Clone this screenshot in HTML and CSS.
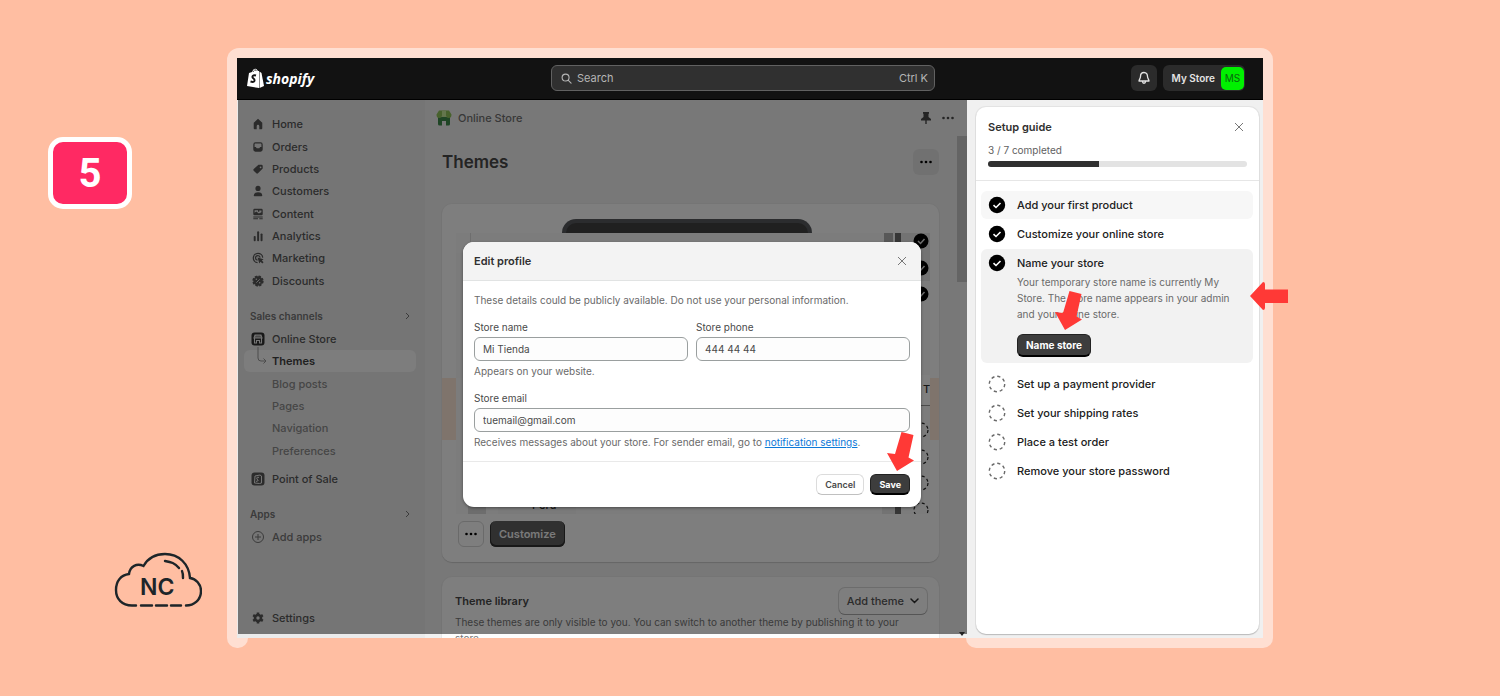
FILE: index.html
```html
<!DOCTYPE html>
<html lang="en">
<head>
    <meta charset="UTF-8">
    <meta name="viewport" content="width=device-width, initial-scale=1.0">
    <title>Edit profile - Shopify</title>
    <link rel="stylesheet" href="styles.css">
</head>
<body>
    <div class="page">
        <div class="margin-column">
            <div class="step">5</div>
            <svg class="cloud" viewBox="0 0 88 56" fill="none" stroke="#1d2529" stroke-width="2.4" stroke-linecap="round">
                <path d="M22 53.500H18C8 53.500 2 47 2 38C2 29 7 23 15 22C16 14 23 11 29.500 14C34 6 42 2 51 2C65 2 75 12 76 26C82 27 87 32 87 39C87 48 80 53.500 72 53.500"/>
                <path d="M27 53.500H38M42 53.500H53M57 53.500H67"/>
                <path d="M51 9C57 10 61 11 65 16M68 19C69 21 69 23 69 26"/>
                <text x="26" y="43" class="cloud-text">NC</text>
            </svg>
        </div>

        <div class="frame">
            <div class="frame-top">
                <div class="app">
                    <header class="topbar">
                        <a class="logo" href="#">
                            <svg width="17" height="20" viewBox="0 0 17 20">
                                <path fill="#fff" d="M2 5L5 4C6 1 8 0 9 1C10 1 10 2 11 3L12 3V20L0 18Z"/>
                                <path fill="#fff" d="M12.500 3.500L14.500 5L17 18L12.500 20Z"/>
                                <path fill="none" stroke="#121212" stroke-width=".7" d="M6 4C7 2 8 1.500 9 2V3"/>
                                <path fill="none" stroke="#121212" stroke-width="1.900" d="M9 7.500C6 6.500 4.500 8.500 6 10C8.500 12 8 15 3.500 13.500"/>
                            </svg>
                            <span>shopify</span>
                        </a>
                        <div class="search">
                            <svg width="11" height="11" viewBox="0 0 12 12" fill="none" stroke="#b5b5b5" stroke-width="1.200" stroke-linecap="round"><circle cx="5" cy="5" r="3.800"/><path d="M8 8L11 11"/></svg>
                            <input type="text" placeholder="Search" aria-label="Search">
                            <span>Ctrl K</span>
                        </div>
                        <div class="account">
                            <button class="bell" aria-label="Notifications">
                                <svg width="14" height="14" viewBox="0 0 14 14" fill="none" stroke="#e3e3e3" stroke-width="1.300" stroke-linejoin="round"><path d="M7 1.500C4.500 1.500 3.500 3.500 3.500 5.500C3.500 7.500 2 8.500 2 10H12C12 8.500 10.500 7.500 10.500 5.500C10.500 3.500 9.500 1.500 7 1.500ZM5.500 10.500C5.500 12.800 8.500 12.800 8.500 10.500"/></svg>
                            </button>
                            <button class="store">My Store <span class="avatar">MS</span></button>
                        </div>
                    </header>

                    <div class="workspace">
                        <div class="admin">
                            <nav class="sidebar">
                                <ul class="menu">
                                    <li><a href="#"><svg viewBox="0 0 14 14"><path d="M7 1L12 5.500V12Q12 13 11 13H8.500V9.500Q8.500 8 7 8T5.500 9.500V13H3Q2 13 2 12V5.500Z"/></svg>Home</a></li>
                                    <li><a href="#"><svg viewBox="0 0 14 14"><path fill-rule="evenodd" d="M4 1.500H10Q12.500 1.500 12.500 4V10Q12.500 12.500 10 12.500H4Q1.500 12.500 1.500 10V4Q1.500 1.500 4 1.500ZM3 3.500V7H4.500L5.500 8.500H8.500L9.500 7H11V3.500Q11 3 10.500 3H3.500Q3 3 3 3.500Z"/></svg>Orders</a></li>
                                    <li><a href="#"><svg viewBox="0 0 14 14"><path fill-rule="evenodd" d="M7.500 2H11Q12.500 2 12.500 3.500V6.500L7 12Q6 13 5 12L2 9Q1 8 2 7ZM10 4A1 1 0 1 0 10 6A1 1 0 1 0 10 4Z"/></svg>Products</a></li>
                                    <li><a href="#"><svg viewBox="0 0 14 14"><circle cx="7" cy="4" r="3"/><path d="M2 12.500Q2 8.500 7 8.500T12 12.500Q12 13 11 13H3Q2 13 2 12.500Z"/></svg>Customers</a></li>
                                    <li><a href="#"><svg viewBox="0 0 14 14"><path fill-rule="evenodd" d="M3 1H11Q12.500 1 12.500 2.500V7Q12.500 8.500 11 8.500H3Q1.500 8.500 1.500 7V2.500Q1.500 1 3 1ZM3 5.500L5 4L8 6.500L11 5V3H8.500V4.500H7V2.500H3Z"/><path d="M1.500 9.800H12.500V11H1.500ZM1.500 12H7V13.200H1.500ZM8.500 12H12.500V13.200H8.500Z"/></svg>Content</a></li>
                                    <li><a href="#"><svg viewBox="0 0 14 14"><rect x="2" y="7" width="2.300" height="6" rx="1"/><rect x="6" y="1.500" width="2.300" height="11.500" rx="1"/><rect x="10" y="4" width="2.300" height="9" rx="1"/></svg>Analytics</a></li>
                                    <li><a href="#"><svg viewBox="0 0 14 14"><path fill="none" stroke="currentColor" stroke-width="1.500" d="M12.500 6.500A5.500 5.500 0 1 0 6.500 12.500M9.500 6.500A2.700 2.700 0 1 0 6.500 9.500"/><path d="M6.500 6.500L13.500 8.500L11.500 10L13.500 12L12 13.500L10 11.500L8.500 13.500Z"/></svg>Marketing</a></li>
                                    <li><a href="#"><svg viewBox="0 0 14 14"><circle cx="7" cy="7" r="5.500"/><circle cx="7" cy="7" r="5.600" fill="none" stroke="currentColor" stroke-width="2" stroke-dasharray="2.800 1.600"/><path stroke="#ebebeb" d="M5 9L9 5"/><circle class="hole" cx="5" cy="5" r=".8"/><circle class="hole" cx="9" cy="9" r=".8"/></svg>Discounts</a></li>
                                </ul>
                                <h3 class="section">Sales channels <svg width="8" height="8" viewBox="0 0 8 8"><path d="M3 1L6 4L3 7"/></svg></h3>
                                <a class="channel online" href="#"><svg viewBox="0 0 14 14"><rect x=".5" y=".5" width="13" height="13" rx="3"/><path fill="none" stroke="#ebebeb" stroke-width="1.100" d="M4 3H10L11 6H3ZM5 3V6M7 3V6M9 3V6M3.500 6.500V11H5.500V8.500H8.500V11H10.500V6.500"/></svg>Online Store</a>
                                <ul class="submenu">
                                    <li><a class="current" href="#"><svg viewBox="0 0 12 18" fill="none"><path d="M2 0V11Q2 14 5 14H10M7.500 11.500L10 14L7.500 16.500"/></svg>Themes</a></li>
                                    <li><a href="#">Blog posts</a></li>
                                    <li><a href="#">Pages</a></li>
                                    <li><a href="#">Navigation</a></li>
                                    <li><a href="#">Preferences</a></li>
                                </ul>
                                <a class="channel pos" href="#"><svg viewBox="0 0 14 14"><rect x=".5" y=".5" width="13" height="13" rx="3"/><path fill="none" stroke="#ebebeb" d="M4 4L9 3L10.500 4V11L8.500 11.500L3.500 11ZM8 5.500Q6 4.500 5.800 6T7 8T5 9.500"/></svg>Point of Sale</a>
                                <h3 class="section">Apps <svg width="8" height="8" viewBox="0 0 8 8"><path d="M3 1L6 4L3 7"/></svg></h3>
                                <a class="channel add" href="#"><svg viewBox="0 0 14 14" fill="none" stroke="currentColor"><circle cx="7" cy="7" r="5.500"/><path d="M7 4V10M4 7H10"/></svg>Add apps</a>
                                <a class="channel settings" href="#"><svg viewBox="0 0 14 14"><circle cx="7" cy="7" r="3" fill="none" stroke="currentColor" stroke-width="2.600"/><path stroke="currentColor" stroke-width="2.600" d="M7 1.500V3.500M7 10.500V12.500M2.200 4.200L4 5.300M10 8.700L11.800 9.800M2.200 9.800L4 8.700M10 5.300L11.800 4.200"/></svg>Settings</a>
                            </nav>

                            <main class="content">
                                <div class="crumbs">
                                    <svg width="16" height="16" viewBox="0 0 16 16"><path fill="#3f8a4a" d="M2 7H14V14Q14 15.500 12.500 15.500H10V11H6V15.500H3.500Q2 15.500 2 14Z"/><path fill="#91c45a" d="M3 .5H13L15.500 4.500Q15.500 8 12.800 8T10 5.500Q10 7 8 7T6 5.500Q6 8 3.200 8T.5 4.500Z"/><path fill="#c9ec9a" d="M6 .5H10V5.500Q10 7 8 7T6 5.500Z"/></svg>
                                    <span>Online Store</span>
                                    <svg class="pin" width="12" height="12" viewBox="0 0 12 12"><path fill="#4a4a4a" d="M3 0H9V1.500L8.500 2V5L11 7V8.500H6.700V12H5.300V8.500H1V7L3.500 5V2L3 1.500Z"/></svg>
                                    <svg width="12" height="4" viewBox="0 0 12 4" fill="#4a4a4a"><circle cx="1.500" cy="2" r="1.300"/><circle cx="6" cy="2" r="1.300"/><circle cx="10.500" cy="2" r="1.300"/></svg>
                                </div>
                                <div class="title-row">
                                    <h1>Themes</h1>
                                    <button class="more gray" aria-label="More actions"><svg width="12" height="4" viewBox="0 0 12 4"><circle cx="1.500" cy="2" r="1.300"/><circle cx="6" cy="2" r="1.300"/><circle cx="10.500" cy="2" r="1.300"/></svg></button>
                                </div>
                                <section class="card theme">
                                    <div class="device"></div>
                                    <div class="preview">
                                        <svg width="120" height="281" viewBox="0 0 120 281">
                                            <path stroke="#dcdcdc" d="M14.500 0V20"/>
                                            <rect y="20" width="14" height="125" fill="#f6f6f6"/>
                                            <rect y="145" width="14" height="62" fill="#f9f9f9"/>
                                            <rect x="12" y="240" width="18" height="41" fill="#dadada"/>
                                            <rect x="42" y="240" width="78" height="41" fill="#f4f4f4"/>
                                            <text x="76" y="276" class="preview-text">Perú</text>
                                        </svg>
                                        <svg width="48" height="281" viewBox="0 0 48 281">
                                            <path fill="#b0b0b0" d="M2 0H11V12H2Z"/><path fill="#6c6c6c" d="M13 0H19V12H13ZM13 250H19V281H13Z"/>
                                            <path fill="#e6e6e6" d="M19 0H48V48H19ZM0 250H13V281H0Z"/>
                                            <rect x="38" y="142" width="10" height="30" fill="#fff"/>
                                            <text x="41" y="160" class="preview-text">T</text>
                                            <path stroke="#999" d="M36 172.500H48"/>
                                            <g><circle cx="39" cy="8" r="7.500"/><circle cx="39" cy="35" r="7.500"/><circle cx="39" cy="61" r="7.500"/></g>
                                            <path fill="none" stroke="#ddd" stroke-width="1.500" d="M36 8L38.500 10.500L42.500 6M36 35L38.500 37.500L42.500 33M36 61L38.500 63.500L42.500 59"/>
                                            <g fill="none" stroke="#222" stroke-width="1.200" stroke-dasharray="3 2.600"><circle cx="39" cy="197" r="7"/><circle cx="39" cy="224" r="7"/><circle cx="39" cy="250" r="7"/><circle cx="39" cy="277" r="7"/></g>
                                        </svg>
                                    </div>
                                    <div class="theme-actions">
                                        <button class="more" aria-label="Theme actions"><svg width="12" height="4" viewBox="0 0 12 4"><circle cx="1.500" cy="2" r="1.300"/><circle cx="6" cy="2" r="1.300"/><circle cx="10.500" cy="2" r="1.300"/></svg></button>
                                        <button class="customize">Customize</button>
                                    </div>
                                </section>
                                <section class="card library">
                                    <div class="library-head">
                                        <h2>Theme library</h2>
                                        <button>Add theme <svg width="9" height="6" viewBox="0 0 9 6" fill="none" stroke="#303030" stroke-width="1.500" stroke-linecap="round"><path d="M1 1L4.500 4.500L8 1"/></svg></button>
                                    </div>
                                    <p>These themes are only visible to you. You can switch to another theme by publishing it to your store.</p>
                                </section>
                                <div class="scroll-thumb"></div>
                            </main>
                        </div>
                        <div class="backdrop"></div>
                        <svg class="scroll-arrow" viewBox="0 0 6 4"><path d="M0 0H6L3 4Z"/></svg>

                        <form class="modal">
                            <div class="modal-head">
                                <h2>Edit profile</h2>
                                <button type="button" class="close" aria-label="Close"><svg width="10" height="10" viewBox="0 0 10 10"><path d="M1 1L9 9M9 1L1 9"/></svg></button>
                            </div>
                            <div class="modal-body">
                                <p class="intro">These details could be publicly available. Do not use your personal information.</p>
                                <div class="fields">
                                    <div class="field">
                                        <label for="store-name">Store name</label>
                                        <input type="text" id="store-name" value="Mi Tienda">
                                        <p>Appears on your website.</p>
                                    </div>
                                    <div class="field">
                                        <label for="store-phone">Store phone</label>
                                        <input type="text" id="store-phone" value="444 44 44">
                                    </div>
                                </div>
                                <div class="field">
                                    <label for="store-email">Store email</label>
                                    <input type="text" id="store-email" value="tuemail@gmail.com">
                                    <p>Receives messages about your store. For sender email, go to <a href="#">notification settings</a>.</p>
                                </div>
                            </div>
                            <div class="modal-foot">
                                <button type="button" class="cancel">Cancel</button>
                                <button type="button" class="dark">Save</button>
                                <svg class="arrow arrow-save" viewBox="0 0 27 39"><path d="M14.500 0L26.500 3L21.500 25.500L27 28.500L10 39L0 21L8 22Z"/></svg>
                            </div>
                        </form>

                        <aside class="guide">
                            <div class="guide-card">
                                <div class="guide-head">
                                    <div class="guide-title">
                                        <h2>Setup guide</h2>
                                        <button class="close" aria-label="Close guide"><svg width="10" height="10" viewBox="0 0 10 10"><path d="M1 1L9 9M9 1L1 9"/></svg></button>
                                    </div>
                                    <p>3 / 7 completed</p>
                                    <div class="progress"><div class="bar" style="width: 43%"></div></div>
                                </div>
                                <ul class="tasks">
                                    <li class="task hovered"><svg class="done" viewBox="0 0 18 18"><circle cx="9" cy="9" r="8.200"/><path d="M5.500 9.200L8 11.500L12.500 7"/></svg><h3>Add your first product</h3></li>
                                    <li class="task"><svg class="done" viewBox="0 0 18 18"><circle cx="9" cy="9" r="8.200"/><path d="M5.500 9.200L8 11.500L12.500 7"/></svg><h3>Customize your online store</h3></li>
                                    <li class="task open">
                                        <svg class="done" viewBox="0 0 18 18"><circle cx="9" cy="9" r="8.200"/><path d="M5.500 9.200L8 11.500L12.500 7"/></svg>
                                        <div>
                                            <h3>Name your store</h3>
                                            <p>Your temporary store name is currently My Store. The store name appears in your admin and your online store.</p>
                                            <div class="task-action">
                                                <button class="dark">Name store</button>
                                                <svg class="arrow arrow-name" viewBox="0 0 27 39"><path d="M14.500 0L26.500 3L21.500 25.500L27 28.500L10 39L0 21L8 22Z"/></svg>
                                            </div>
                                        </div>
                                        <svg class="arrow-left" viewBox="0 0 38 28"><path d="M0 14L13 0Q15 0 15 2V7.500H38V21H15V26Q15 28 13 28Z"/></svg>
                                    </li>
                                    <li class="task"><svg class="todo" viewBox="0 0 18 18"><circle cx="9" cy="9" r="7.700"/></svg><h3>Set up a payment provider</h3></li>
                                    <li class="task"><svg class="todo" viewBox="0 0 18 18"><circle cx="9" cy="9" r="7.700"/></svg><h3>Set your shipping rates</h3></li>
                                    <li class="task"><svg class="todo" viewBox="0 0 18 18"><circle cx="9" cy="9" r="7.700"/></svg><h3>Place a test order</h3></li>
                                    <li class="task"><svg class="todo" viewBox="0 0 18 18"><circle cx="9" cy="9" r="7.700"/></svg><h3>Remove your store password</h3></li>
                                </ul>
                            </div>
                        </aside>
                    </div>
                </div>
            </div>
            <div class="frame-feet"><span class="foot-left"></span><span class="foot-right"></span></div>
        </div>
    </div>
</body>
</html>
```
FILE: styles.css
```css
* {
    box-sizing: border-box;
}
body {
    margin: 0;
    background: #ffbea2;
    font-family: Inter, Arial, sans-serif;
    font-size: 11px;
    color: #303030;
}
h1, h2, h3, p, ul {
    margin: 0;
    padding: 0;
    list-style: none;
}
h2, h3 {
    font-size: 11px;
    font-weight: 600;
}
a {
    color: inherit;
    text-decoration: none;
}
button, input {
    font: inherit;
    color: inherit;
    margin: 0;
}
button {
    display: flex;
    align-items: center;
    justify-content: center;
    border: none;
    padding: 0;
    cursor: pointer;
    white-space: nowrap;
}

/* outer page */
.page {
    display: grid;
    grid-template-columns: 227px 1fr;
    min-height: 100vh;
    padding: 48px 227px 48px 0;
}
.margin-column {
    display: flex;
    flex-direction: column;
    justify-content: space-between;
    padding: 89px 0 40px 48px;
}
.step {
    display: flex;
    align-items: center;
    justify-content: center;
    width: 84px;
    height: 72px;
    border: 5px solid #fff;
    border-radius: 15px;
    background: #ff2963;
    color: #fff;
    font-family: Roboto, sans-serif;
    font-size: 40px;
    font-weight: 700;
}
.cloud {
    width: 88px;
    height: 56px;
    margin-left: 66px;
}
.cloud-text {
    font-size: 23px;
    font-weight: 600;
    fill: #1d2529;
    stroke: none;
}
.frame {
    display: flex;
    flex-direction: column;
    min-width: 0;
}
.frame-top {
    flex: 1;
    display: flex;
    background: #ffdfd2;
    border-radius: 12px 12px 0 0;
    padding: 10px 10px 0;
}
.frame-feet {
    display: flex;
    justify-content: space-between;
    height: 10px;
}
.frame-feet span {
    background: #ffdfd2;
    border-radius: 0 0 10px 10px;
}
.foot-left {
    width: 21px;
}
.foot-right {
    width: 307px;
}
.app {
    flex: 1;
    display: flex;
    flex-direction: column;
    min-width: 0;
}

/* top bar */
.topbar {
    display: grid;
    grid-template-columns: 1fr 384px 1fr;
    align-items: center;
    height: 42px;
    padding: 0 18px 1px 4px;
    background: #121212;
    border-bottom: 1px solid #000;
    color: #e3e3e3;
}
.logo {
    display: flex;
    align-items: center;
    gap: 2px;
    margin-left: 6px;
    color: #fff;
    font-family: "Open Sans", sans-serif;
    font-size: 14px;
    font-style: italic;
    font-weight: 700;
}
.search {
    display: flex;
    align-items: center;
    gap: 5px;
    height: 26px;
    padding: 0 6px 0 9px;
    border: 1px solid #616161;
    border-radius: 6px;
    background: #303030;
    color: #b5b5b5;
}
.search input {
    flex: 1;
    min-width: 0;
    border: none;
    padding: 0;
    background: none;
}
.search input::placeholder {
    color: #b5b5b5;
}
.account {
    display: flex;
    justify-content: flex-end;
    gap: 6px;
    font-size: 10px;
    font-weight: 600;
}
.bell, .store {
    height: 26px;
    border-radius: 6px;
    background: #2b2b2b;
}
.bell {
    width: 26px;
}
.store {
    gap: 6px;
    padding: 0 1px 0 9px;
}
.avatar {
    width: 23px;
    line-height: 23px;
    border-radius: 5px;
    background: #00f000;
    color: #08690d;
    font-size: 10px;
    font-weight: 400;
}

/* admin behind the modal */
.workspace {
    position: relative;
    flex: 1;
    display: flex;
    min-height: 538px;
}
.admin {
    flex: 1;
    display: flex;
    min-width: 0;
    background: #f1f1f1;
}
.backdrop {
    position: absolute;
    top: 0;
    right: 296px;
    bottom: 4px;
    left: 1px;
    background: rgba(0, 0, 0, 0.5);
}
.sidebar {
    display: flex;
    flex-direction: column;
    width: 188px;
    padding: 13px 9px 9px 7px;
    background: #ebebeb;
    font-weight: 500;
    color: #575757;
}
.menu, .submenu {
    display: flex;
    flex-direction: column;
}
.menu {
    height: 179px;
}
.submenu {
    height: 112px;
    color: #8c8c8c;
}
.menu li, .submenu li {
    flex: 1;
    display: flex;
}
.menu a, .channel {
    display: flex;
    align-items: center;
    gap: 8px;
    padding-left: 8px;
}
.channel {
    gap: 7px;
    padding-left: 7px;
    height: 23px;
}
.menu svg {
    width: 12px;
    height: 12px;
    fill: currentColor;
}
.channel svg {
    width: 14px;
    height: 14px;
    fill: currentColor;
}
.menu .hole {
    fill: #ebebeb;
}
.submenu a {
    position: relative;
    flex: 1;
    display: flex;
    align-items: center;
    padding-left: 28px;
    border-radius: 6px;
}
.submenu .current {
    background: #fafafa;
    color: #404040;
    font-weight: 600;
}
.submenu svg {
    position: absolute;
    left: 12px;
    top: -3px;
    width: 12px;
    height: 18px;
    stroke: #999;
}
.online svg {
    color: #303030;
}
.pos {
    margin-top: 5px;
}
.section {
    display: flex;
    align-items: center;
    justify-content: space-between;
    height: 23px;
    margin-top: 12px;
    padding: 0 5px 0 6px;
    font-size: 10px;
    font-weight: 600;
    color: #767676;
}
.section svg {
    fill: none;
    stroke: #767676;
}
.channel.add {
    color: #767676;
}
.channel.add svg {
    fill: none;
}
.channel.settings {
    margin-top: auto;
}
.content {
    position: relative;
    flex: 1;
    display: flex;
    flex-direction: column;
    height: 538px;
    padding: 0 28px 0 17px;
    overflow: hidden;
}
.crumbs {
    flex: none;
    display: flex;
    align-items: center;
    gap: 6px;
    height: 36px;
    margin: 0 -15px 0 -6px;
    color: #707070;
    font-weight: 500;
}
.crumbs .pin {
    margin: 0 4px 0 auto;
}
.title-row {
    flex: none;
    display: flex;
    align-items: center;
    justify-content: space-between;
    height: 52px;
    margin-bottom: 16px;
}
h1 {
    font-size: 17px;
    font-weight: 600;
    line-height: 20px;
    color: #484848;
}
.more {
    width: 26px;
    height: 26px;
    border: 1px solid #d4d4d4;
    border-radius: 6px;
    background: #fdfdfd;
}
.more.gray {
    border: none;
    background: #e3e3e3;
}
.card {
    flex: none;
    border-radius: 10px;
    background: #fdfdfd;
    box-shadow: 0 1px 1px #ccc, 0 0 0 1px #ebebeb;
}
.theme {
    height: 358px;
    padding-top: 15px;
    background: linear-gradient(#fdfdfd 174px, #ffe8d8 174px, #ffe8d8 236px, #fdfdfd 236px);
}
.device {
    width: 250px;
    height: 14px;
    margin-left: calc(50% - 129px);
    border: 4px solid #56595d;
    border-bottom: none;
    border-radius: 14px 14px 0 0;
    background: #404040;
}
.preview {
    display: flex;
    justify-content: space-between;
    margin: 0 9px 0 14px;
    height: 281px;
    background: #f9f9f9;
}
.preview-text {
    font-size: 11px;
    font-weight: 500;
    fill: #303030;
}
.theme-actions {
    display: flex;
    gap: 6px;
    padding: 7px 15px 7px 16px;
}
.customize {
    height: 26px;
    padding: 0 9px;
    border-radius: 6px;
    background: #616161;
    box-shadow: inset 0 -1px 0 1px #303030;
    color: #f4f4f4;
    font-weight: 600;
}
.library {
    margin-top: 15px;
    padding: 11px 12px 11px 13px;
    color: #767676;
}
.library h2 {
    color: #484848;
}
.library-head {
    display: flex;
    justify-content: space-between;
    align-items: center;
}
.library button {
    gap: 6px;
    height: 26px;
    padding: 0 8px;
    border-radius: 6px;
    background: #fdfdfd;
    box-shadow: 0 1px 0 #aaa, 0 0 0 1px #d8d8d8;
    color: #575757;
    font-weight: 500;
}
.library p {
    padding-right: 8px;
    font-size: 10px;
    line-height: 16px;
}
.scroll-thumb {
    position: absolute;
    top: 36px;
    right: 0;
    width: 10px;
    height: 146px;
    background: #c8c8c8;
}
.scroll-arrow {
    position: absolute;
    right: 298px;
    bottom: 2px;
    width: 6px;
    height: 4px;
    fill: #222;
}

/* modal */
.modal {
    position: absolute;
    top: 142px;
    right: 342px;
    left: 226px;
    overflow: hidden;
    border-radius: 11px;
    background: #fff;
    box-shadow: 0 1px 3px rgba(0, 0, 0, 0.4);
    color: #6a6a6a;
    font-size: 10px;
}
.modal-head {
    display: flex;
    align-items: center;
    justify-content: space-between;
    height: 39px;
    padding: 0 11px;
    border-bottom: 1px solid #e1e3e3;
    background: #f3f3f3;
    color: #303030;
}
.close {
    width: 16px;
    height: 16px;
    background: none;
}
.close svg {
    fill: none;
    stroke: #777;
}
.modal-body {
    padding: 11px;
    line-height: 16px;
}
.intro {
    margin-bottom: 11px;
}
.fields {
    display: grid;
    grid-template-columns: 1fr 1fr;
    gap: 8px;
    margin-bottom: 11px;
}
.field {
    display: flex;
    flex-direction: column;
}
.field label {
    margin-bottom: 2px;
    color: #4a4a4a;
}
.field input {
    width: 100%;
    height: 24px;
    margin-bottom: 2px;
    padding: 0 8px;
    border: 1px solid #9a9f9f;
    border-radius: 6px;
    background: #fdfdfd;
    color: #4a4a4a;
}
.field a {
    color: #0c79d8;
    text-decoration: underline;
}
.modal-foot {
    position: relative;
    display: flex;
    justify-content: flex-end;
    gap: 6px;
    padding: 12px 11px;
    border-top: 1px solid #e9e9e9;
    font-size: 9px;
    font-weight: 600;
}
.cancel, .dark {
    padding: 0 8px;
    border-radius: 6px;
}
.cancel {
    height: 21px;
    border: 1px solid #dcdcdc;
    border-bottom-color: #c0c0c0;
    background: #fff;
    color: #4a4a4a;
}
.dark {
    height: 21px;
    border: 1px solid #222;
    border-bottom: 2px solid #000;
    background: #3d3d3d;
    color: #fff;
    font-weight: 700;
}
.arrow {
    position: absolute;
    width: 27px;
    height: 39px;
}
.arrow, .arrow-left {
    fill: #ff3936;
}
.arrow-save {
    right: 7px;
    bottom: 36px;
}

/* setup guide */
.guide {
    display: flex;
    width: 296px;
    padding: 7px 4px 4px 9px;
    background: #f0f0f0;
}
.guide-card {
    flex: 1;
    border-radius: 10px;
    background: #fff;
    box-shadow: 0 1px 1px #bbb, 0 0 0 1px #e3e3e3;
}
.guide-head {
    padding: 12px;
    border-bottom: 1px solid #e6e6e6;
    color: #616161;
    font-size: 10px;
}
.guide-title {
    display: flex;
    justify-content: space-between;
    align-items: center;
    height: 16px;
    color: #303030;
}
.guide-head p {
    margin-top: 7px;
    line-height: 16px;
}
.progress {
    height: 6px;
    margin: 3px 0 1px;
    border-radius: 3px;
    background: #e3e3e3;
    overflow: hidden;
}
.bar {
    height: 6px;
    background: #303030;
}
.tasks {
    display: flex;
    flex-direction: column;
    gap: 1px;
    padding: 10px 6px 10px 5px;
}
.task {
    position: relative;
    display: flex;
    align-items: flex-start;
    gap: 11px;
    padding: 6px 7px;
    border-radius: 6px;
}
.task h3 {
    line-height: 16px;
    font-weight: 500;
    color: #202020;
}
.task p {
    margin: 3px 0 12px;
    padding-right: 8px;
    font-size: 10px;
    line-height: 16px;
    color: #6a6a6a;
}
.done, .todo {
    flex: none;
    width: 18px;
    height: 18px;
    margin: -1px 0;
}
.done path {
    fill: none;
    stroke: #fff;
    stroke-width: 1.6;
}
.todo circle {
    fill: none;
    stroke: #6a6a6a;
    stroke-width: 1.4;
    stroke-dasharray: 3.2 2.848;
}
.hovered {
    background: #f7f7f7;
}
.open {
    margin-bottom: 6px;
    background: #f2f2f2;
}
.task-action {
    position: relative;
    width: max-content;
    font-size: 10px;
}
.task-action .dark {
    height: 23px;
}
.arrow-name {
    right: 9px;
    bottom: 27px;
}
.arrow-left {
    position: absolute;
    top: 33px;
    right: -35px;
    width: 38px;
    height: 28px;
}
```
